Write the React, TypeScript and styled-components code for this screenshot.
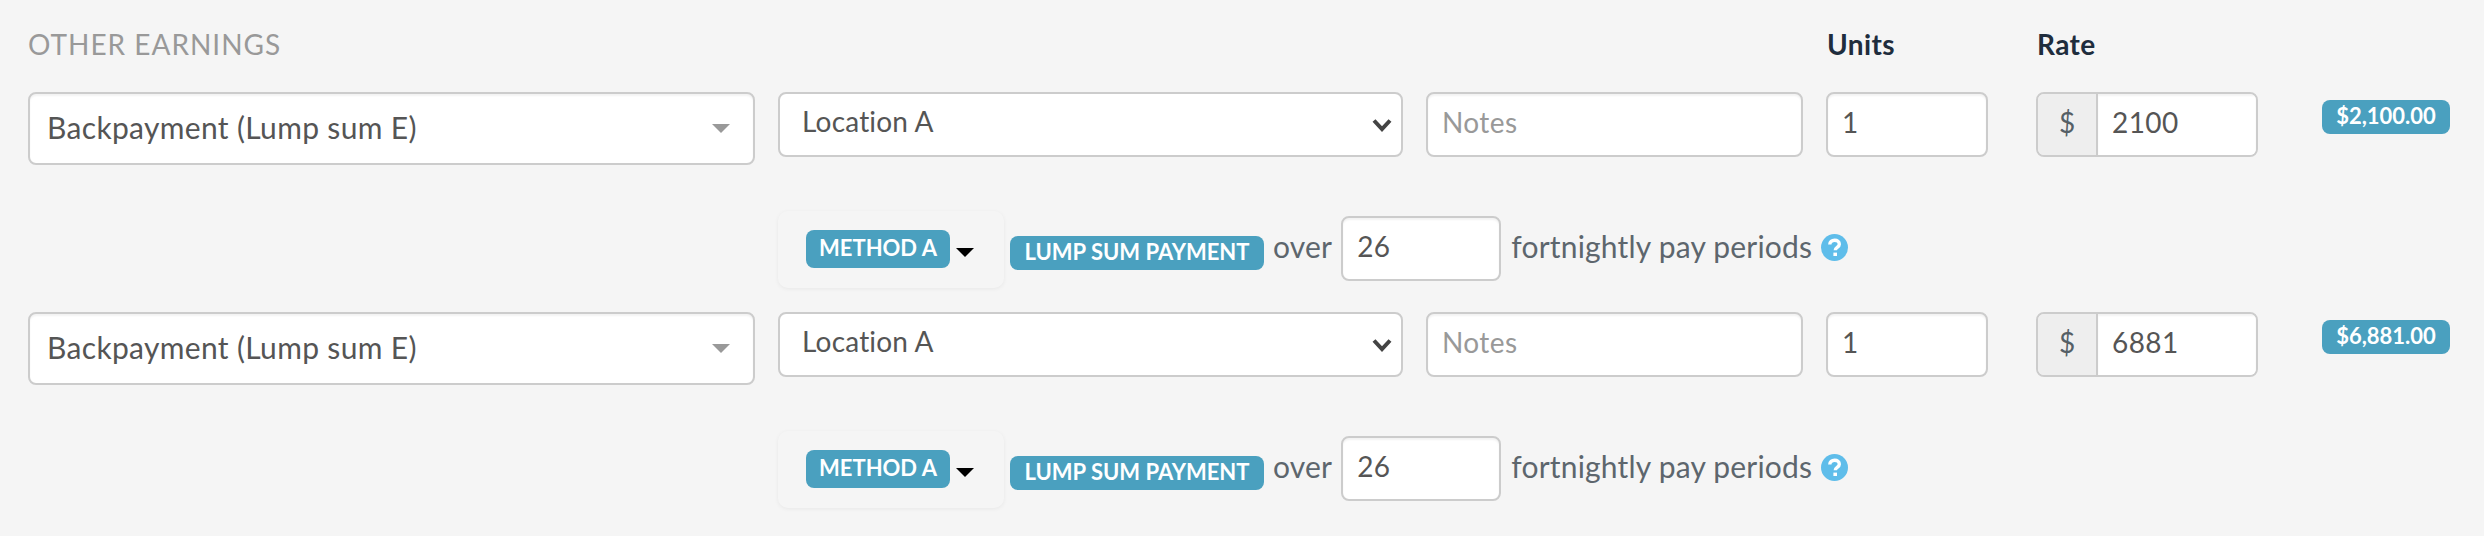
import React from 'react';
import styled, { createGlobalStyle } from 'styled-components';

const GlobalStyle = createGlobalStyle`
  html, body {
    margin: 0;
    padding: 0;
    background: #f5f5f5;
  }
  * {
    box-sizing: border-box;
  }
`;

const Page = styled.div`
  width: 2484px;
  height: 536px;
  overflow: hidden;
  padding: 28px 0 0 28px;
  background: #f5f5f5;
  font-family: Lato, "Open Sans", sans-serif;
  font-size: 28px;
  color: #555;
`;

const HeaderRow = styled.div`
  display: flex;
  align-items: center;
  height: 32px;
  margin-bottom: 32px;
`;

const Title = styled.div`
  width: 1799px;
  font-size: 28px;
  letter-spacing: 1px;
  color: #999;
  text-transform: uppercase;
`;

const ColumnLabel = styled.div<{ $width: number }>`
  width: ${(p) => p.$width}px;
  font-size: 28px;
  font-weight: 700;
  letter-spacing: 0.4px;
  color: #1f2d3d;
`;

const Row = styled.div`
  display: flex;
  align-items: flex-start;
  gap: 23px;
`;

const SearchSelect = styled.div`
  width: 727px;
  height: 73px;
  display: flex;
  align-items: center;
  justify-content: space-between;
  padding: 0 23px 4px 17px;
  background: #fff;
  border: 2px solid #ccc;
  border-radius: 8px;
  box-shadow: inset 0 2px 2px rgba(0, 0, 0, 0.05);
  font-size: 30px;
  letter-spacing: 0.33px;
`;

const Caret = styled.span`
  width: 0;
  height: 0;
  margin-top: 3px;
  border-left: 9px solid transparent;
  border-right: 9px solid transparent;
  border-top: 9px solid #999;
`;

const LocationSelect = styled.div`
  width: 625px;
  height: 65px;
  display: flex;
  align-items: center;
  justify-content: space-between;
  padding: 0 9px 8px 22px;
  background: #fff;
  border: 2px solid #ccc;
  border-radius: 8px;
  letter-spacing: 0.2px;
`;

const Chevron = styled.svg`
  width: 20px;
  height: 14px;
  margin-top: 8px;
`;

const TextInput = styled.input<{ $width: number }>`
  width: ${(p) => p.$width}px;
  height: 65px;
  padding: 0 14px 5px;
  background: #fff;
  border: 2px solid #ccc;
  border-radius: 8px;
  box-shadow: inset 0 2px 2px rgba(0, 0, 0, 0.05);
  font: inherit;
  letter-spacing: 0.4px;
  color: #555;
  outline: none;

  &::placeholder {
    color: #999;
    opacity: 1;
  }
`;

const RateGroup = styled.div`
  width: 222px;
  height: 65px;
  margin-left: 25px;
  display: flex;
  border: 2px solid #ccc;
  border-radius: 8px;
  overflow: hidden;
`;

const Addon = styled.span`
  width: 60px;
  display: flex;
  align-items: center;
  justify-content: center;
  padding-bottom: 5px;
  background: #eee;
  border-right: 2px solid #ccc;
  color: #555f66;
`;

const RateInput = styled.input`
  flex: 1;
  min-width: 0;
  padding: 0 14px 5px;
  background: #fff;
  border: 0;
  box-shadow: inset 0 2px 2px rgba(0, 0, 0, 0.05);
  font: inherit;
  letter-spacing: 0.4px;
  color: #555;
  outline: none;
`;

const Badge = styled.span`
  display: inline-flex;
  align-items: center;
  justify-content: center;
  background: #4aa0bf;
  border-radius: 8px;
  color: #fff;
  font-weight: 700;
  font-size: 22px;
  text-transform: uppercase;
  white-space: nowrap;
`;

const AmountBadge = styled(Badge)`
  width: 128px;
  height: 34px;
  margin: 8px 0 0 41px;
  padding-bottom: 3px;
`;

const MethodRow = styled.div`
  display: flex;
  align-items: center;
  height: 77px;
  margin: 46px 0 24px 750px;
  color: #5d666d;
  font-size: 30px;
  letter-spacing: 0.2px;
`;

const MethodBox = styled.div`
  width: 226px;
  height: 77px;
  display: flex;
  align-items: center;
  padding: 0 0 2px 28px;
  border-radius: 10px;
  box-shadow: 0 1px 4px rgba(0, 0, 0, 0.06);
  letter-spacing: 0;
`;

const MethodBadge = styled(Badge)`
  width: 144px;
  height: 38px;
  padding-bottom: 2px;
`;

const MethodCaret = styled.span`
  width: 0;
  height: 0;
  margin: 8px 0 0 6px;
  border-left: 9px solid transparent;
  border-right: 9px solid transparent;
  border-top: 9px solid #000;
`;

const LumpBadge = styled(Badge)`
  width: 254px;
  height: 34px;
  margin: 7px 0 0 6px;
  padding-bottom: 4px;
  letter-spacing: 0;
`;

const Over = styled.span`
  margin: 0 9px;
  padding-bottom: 8px;
`;

const PeriodsInput = styled(TextInput)`
  margin-top: -2px;
  font-size: 28px;
`;

const Periods = styled.span`
  margin-left: 10px;
  padding-bottom: 8px;
`;

const HelpIcon = styled.svg`
  width: 27px;
  height: 27px;
  margin: 0 0 5px 9px;
`;

const payLines = [
  { rate: '2100', amount: '$2,100.00' },
  { rate: '6881', amount: '$6,881.00' },
];

export default function App() {
  return (
    <Page>
      <GlobalStyle />
      <HeaderRow>
        <Title>Other Earnings</Title>
        <ColumnLabel $width={210}>Units</ColumnLabel>
        <ColumnLabel $width={200}>Rate</ColumnLabel>
      </HeaderRow>

      {payLines.map((line) => (
        <React.Fragment key={line.rate}>
          <Row>
            <SearchSelect>
              <span>Backpayment (Lump sum E)</span>
              <Caret />
            </SearchSelect>
            <LocationSelect>
              <span>Location A</span>
              <Chevron viewBox="0 0 20 14">
                <path d="M2 2.5 10 11 18 2.5" fill="none" stroke="#444" strokeWidth="4" />
              </Chevron>
            </LocationSelect>
            <TextInput $width={377} placeholder="Notes" readOnly />
            <TextInput $width={162} value="1" readOnly />
            <RateGroup>
              <Addon>$</Addon>
              <RateInput value={line.rate} readOnly />
            </RateGroup>
            <AmountBadge>{line.amount}</AmountBadge>
          </Row>
          <MethodRow>
            <MethodBox>
              <MethodBadge>Method A</MethodBadge>
              <MethodCaret />
            </MethodBox>
            <LumpBadge>Lump sum payment</LumpBadge>
            <Over>over</Over>
            <PeriodsInput $width={160} value="26" readOnly />
            <Periods>fortnightly pay periods</Periods>
            <HelpIcon viewBox="0 0 27 27">
              <circle cx="13.5" cy="13.5" r="13.5" fill="#5fbdea" />
              <path
                d="M8.8 10.6c0-2.8 2.1-4.4 4.8-4.4 2.7 0 4.7 1.6 4.7 4 0 3.2-4 3.2-4 6"
                fill="none"
                stroke="#fff"
                strokeWidth="3.4"
              />
              <rect x="12.4" y="18.6" width="3.6" height="3.4" fill="#fff" />
            </HelpIcon>
          </MethodRow>
        </React.Fragment>
      ))}
    </Page>
  );
}
